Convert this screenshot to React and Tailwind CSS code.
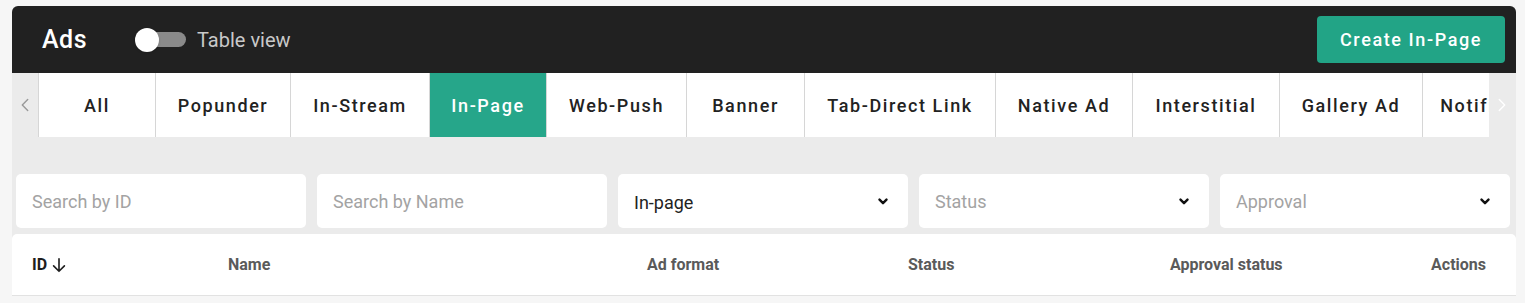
import { useState } from "react";

const tabs = [
  { label: "All", w: "w-[117px]" },
  { label: "Popunder", w: "w-[135px]" },
  { label: "In-Stream", w: "w-[139px]" },
  { label: "In-Page", w: "w-[117px]" },
  { label: "Web-Push", w: "w-[140px]" },
  { label: "Banner", w: "w-[118px]" },
  { label: "Tab-Direct Link", w: "w-[191px]" },
  { label: "Native Ad", w: "w-[137px]" },
  { label: "Interstitial", w: "w-[147px]" },
  { label: "Gallery Ad", w: "w-[143px]" },
  { label: "Notifications", w: "w-[160px]" },
];

const Chevron = ({ dir = "down", className = "" }) => {
  const d = {
    down: "M5 8l5 5 5-5",
    left: "M13 4l-6 6 6 6",
    right: "M7 4l6 6-6 6",
  }[dir];
  return (
    <svg viewBox="0 0 20 20" className={className} fill="none" stroke="currentColor" strokeLinecap="round" strokeLinejoin="round">
      <path d={d} />
    </svg>
  );
};

const Field = ({ placeholder, value, select }) => (
  <div className="w-[290px] h-[54px] bg-white rounded-[5px] flex items-center justify-between pl-[16px] pr-[18px]">
    <span className={`text-[18px] ${value ? "text-[#222] pt-[2px]" : "text-[#a3a3a3]"}`}>
      {value || placeholder}
    </span>
    {select && <Chevron dir="down" className="w-[14px] h-[14px] text-[#111] stroke-[3.5]" />}
  </div>
);

const App = () => {
  const [active] = useState("In-Page");

  return (
    <div className="w-[1525px] h-[303px] bg-[#f6f6f6] pt-[6px] pl-[12px] overflow-hidden font-['Roboto',sans-serif]">
      <div className="w-[1504px] bg-[#ebebeb] rounded-t-[6px] overflow-hidden">
        {/* Header */}
        <div className="h-[67px] bg-[#212121] flex items-center justify-between pl-[30px] pr-[11px]">
          <div className="flex items-center">
            <span className="text-white text-[25px] font-medium tracking-[0.5px]">Ads</span>
            <div className="relative ml-[48px] w-[51px] h-[24px] flex items-center">
              <div className="ml-[5px] w-[46px] h-[15px] rounded-full bg-[#8a8a8a]" />
              <div className="absolute left-0 top-0 w-[24px] h-[24px] rounded-full bg-white shadow" />
            </div>
            <span className="ml-[11px] text-[20px] text-[#c9c9c9]">Table view</span>
          </div>
          <button className="h-[47px] w-[188px] rounded-[4px] bg-[#22a486] text-white text-[18px] font-medium tracking-[1.6px]">
            Create In-Page
          </button>
        </div>

        {/* Tabs */}
        <div className="h-[64px] flex">
          <div className="w-[26px] flex items-center justify-center">
            <Chevron dir="left" className="w-[18px] h-[18px] text-[#9a9a9a] stroke-[1.6]" />
          </div>
          <div className="w-[1451px] flex overflow-hidden">
            {tabs.map((t) => (
              <div
                key={t.label}
                className={`${t.w} shrink-0 h-full flex items-center justify-center text-[18px] font-medium tracking-[1.6px] whitespace-nowrap border-l border-[#d6d6d6] ${
                  t.label === active ? "bg-[#26a68a] text-white border-[#26a68a]" : "bg-white text-[#222]"
                }`}
              >
                {t.label}
              </div>
            ))}
          </div>
          <div className="flex-1 flex items-center justify-start pl-[4px]">
            <Chevron dir="right" className="w-[18px] h-[18px] text-white stroke-[1.6]" />
          </div>
        </div>

        {/* Filters */}
        <div className="flex gap-[11px] px-[4px] pt-[37px] pb-[6px]">
          <Field placeholder="Search by ID" />
          <Field placeholder="Search by Name" />
          <Field value="In-page" select />
          <Field placeholder="Status" select />
          <Field placeholder="Approval" select />
        </div>

        {/* Table header */}
        <div className="h-[62px] bg-white rounded-t-[5px] border-b border-[#e2e2e2] flex items-center pl-[20px] pr-[30px] pt-[1px] text-[16px] font-bold text-[#5a5a5a]">
          <div className="w-[196px] flex items-center text-[#1e1e1e]">
            ID
            <svg viewBox="0 0 20 20" className="ml-[3px] w-[18px] h-[18px]" fill="none" stroke="currentColor" strokeWidth="1.8" strokeLinecap="round" strokeLinejoin="round">
              <path d="M10 3v14M4 11l6 6 6-6" />
            </svg>
          </div>
          <div className="w-[419px]">Name</div>
          <div className="w-[261px]">Ad format</div>
          <div className="w-[262px]">Status</div>
          <div className="flex-1">Approval status</div>
          <div>Actions</div>
        </div>
      </div>
    </div>
  );
};

export default App;
